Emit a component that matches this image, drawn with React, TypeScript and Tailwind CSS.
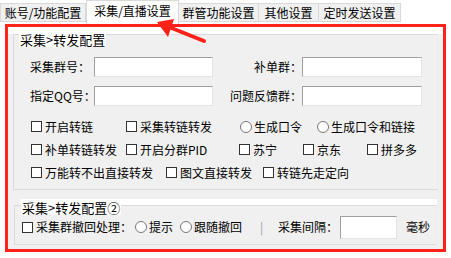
import React from 'react';

const font = { fontFamily: '"Noto Sans CJK SC", "Noto Sans", sans-serif' };

const tabs = [
  { label: '账号/功能配置', w: 'w-[86px]' },
  { label: '采集/直播设置', w: 'w-[93px]', active: true },
  { label: '群管功能设置', w: 'w-[81px]' },
  { label: '其他设置', w: 'w-[61px]' },
  { label: '定时发送设置', w: 'w-[83px]' },
];

function Box() {
  return <span className="w-[11px] h-[11px] border border-[#333] bg-white shrink-0" />;
}

function Radio() {
  return <span className="w-[12px] h-[12px] rounded-full border border-[#777] bg-white shrink-0" />;
}

function Check({ label, w }: { label: string; w: string }) {
  return (
    <div className={`flex items-center gap-[3px] whitespace-nowrap ${w}`}>
      <Box />
      <span>{label}</span>
    </div>
  );
}

function Opt({ label, w }: { label: string; w: string }) {
  return (
    <div className={`flex items-center gap-[2px] whitespace-nowrap ${w}`}>
      <Radio />
      <span>{label}</span>
    </div>
  );
}

function Input({ w, h = 'h-[20px]' }: { w: string; h?: string }) {
  return <div className={`${w} ${h} shrink-0 bg-white border-t border-l border-[#a0a0a0] border-r-[#e3e3e3] border-b-[#e3e3e3] border-r border-b`} />;
}

export default function App() {
  return (
    <div className="w-[451px] h-[258px] bg-white relative overflow-hidden text-[12px] text-black leading-none whitespace-nowrap" style={font}>
      {/* tabs */}
      <div className="h-[24px] flex items-start">
        {tabs.map((t) => (
          <div
            key={t.label}
            className={`${t.w} flex items-center justify-center border border-[#d9d9d9] ${
              t.active ? 'bg-white h-[24px] pb-[4px] border-b-0' : 'bg-[#f0f0f0] h-[19px] mt-[3px] -ml-px first:ml-0'
            }`}
          >
            {t.label}
          </div>
        ))}
      </div>

      {/* tab page with red highlight */}
      <div className="mx-[5px] h-[228px] border-[3px] border-[#ff2219] bg-[#f0f0f0] flex flex-col">
        <div className="h-[7px] bg-white shrink-0" />

        {/* group 1 */}
        <div className="ml-[5px] mr-[5px] h-[156px] border border-[#dadada] border-r-[#ececec] relative shrink-0">
          <span className="absolute left-[5px] top-[-3px] bg-white px-[1px] py-[1px] text-[13px]">采集&gt;转发配置</span>
          <div className="pt-[22px] pl-[16px] flex flex-col">
            <div className="flex items-center h-[20px]">
              <span className="w-[64px]">采集群号：</span>
              <Input w="w-[119px]" />
              <span className="w-[89px] text-right">补单群：</span>
              <Input w="w-[120px]" />
            </div>
            <div className="flex items-center h-[20px] mt-[9px]">
              <span className="w-[64px]">指定QQ号：</span>
              <Input w="w-[119px]" />
              <span className="w-[89px] text-right">问题反馈群：</span>
              <Input w="w-[120px]" />
            </div>
            <div className="mt-[9px] flex items-center h-[23px] pl-[1px]">
              <Check label="开启转链" w="w-[95px]" />
              <Check label="采集转链转发" w="w-[114px]" />
              <Opt label="生成口令" w="w-[77px]" />
              <Opt label="生成口令和链接" w="w-[110px]" />
            </div>
            <div className="flex items-center h-[23px] pl-[1px]">
              <Check label="补单转链转发" w="w-[95px]" />
              <Check label="开启分群PID" w="w-[113px]" />
              <Check label="苏宁" w="w-[64px]" />
              <Check label="京东" w="w-[64px]" />
              <Check label="拼多多" w="w-[60px]" />
            </div>
            <div className="flex items-center h-[23px] pl-[1px]">
              <Check label="万能转不出直接转发" w="w-[135px]" />
              <Check label="图文直接转发" w="w-[97px]" />
              <Check label="转链先走定向" w="w-[110px]" />
            </div>
          </div>
        </div>

        <div className="h-[9px] shrink-0" />

        {/* group 2 */}
        <div className="ml-[6px] mr-[6px] shrink-0">
          <div className="h-[6px] bg-white ml-[6px]" />
          <div className="h-[40px] border border-[#dadada] border-r-[#ececec] relative">
            <span className="absolute left-[6px] top-[-6px] bg-white px-[1px] py-[1px] text-[13px]">采集&gt;转发配置②</span>
            <div className="flex items-center h-full pt-[4px] pl-[7px]">
              <Check label="采集群撤回处理：" w="w-[113px]" />
              <Opt label="提示" w="w-[45px]" />
              <Opt label="跟随撤回" w="w-[80px]" />
              <span className="w-[18px] text-[#999]">|</span>
              <span className="w-[62px]">采集间隔：</span>
              <Input w="w-[57px]" h="h-[23px]" />
              <span className="ml-[9px]">毫秒</span>
            </div>
          </div>
        </div>
      </div>

      {/* annotation arrow */}
      <svg className="absolute left-0 top-0 pointer-events-none" width="451" height="258">
        <polygon points="157,22 174,19 168,37" fill="#ff2219" />
        <line x1="169" y1="27" x2="204" y2="41" stroke="#ff2219" strokeWidth="4" strokeLinecap="round" />
      </svg>
    </div>
  );
}
